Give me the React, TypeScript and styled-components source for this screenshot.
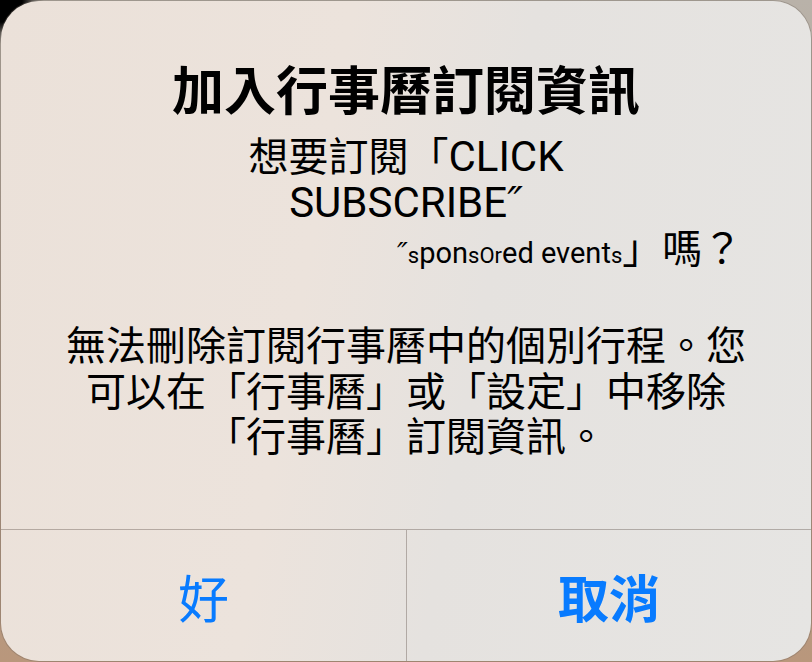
import React from "react";
import styled, { createGlobalStyle, css } from "styled-components";

const GlobalStyle = createGlobalStyle`
  html, body {
    margin: 0;
    padding: 0;
  }
  body {
    width: 812px;
    height: 662px;
    overflow: hidden;
    background:
      radial-gradient(circle at 0 0, #000 0, #000 22px, rgba(0,0,0,0) 44px),
      linear-gradient(to bottom, #b9b2a9 0%, #b49a86 70%, #b9977c 100%);
    font-family: "Liberation Sans", "Noto Sans CJK TC", sans-serif;
  }
`;

const Page = styled.div`
  width: 812px;
  height: 662px;
  padding: 1px;
  box-sizing: border-box;
  display: flex;
`;

const Dialog = styled.div`
  width: 810px;
  height: 660px;
  border-radius: 38px;
  overflow: hidden;
  display: flex;
  flex-direction: column;
  background: linear-gradient(100deg, #ebe1d9 0%, #ece3dc 38%, #e5e2df 58%, #e6e5e3 100%);
  box-shadow: 0 0 0 1px rgba(110, 100, 92, 0.35);
`;

const Content = styled.div`
  flex: 1;
  padding-top: 57px;
  display: flex;
  flex-direction: column;
  align-items: center;
  color: #000;
`;

const Title = styled.div`
  font-family: "Noto Sans CJK TC", sans-serif;
  font-size: 52px;
  font-weight: 700;
  height: 60px;
  line-height: 60px;
  white-space: nowrap;
`;

const Message = styled.div`
  margin-top: 13px;
  width: 100%;
  text-align: center;
`;

const Paragraph = styled.div<{ $gap?: number }>`
  margin-top: ${(p) => p.$gap ?? 0}px;
`;

const Line = styled.div<{ $lh: number; $indent?: number }>`
  font-family: "Noto Sans CJK TC", sans-serif;
  font-size: 40px;
  height: ${(p) => p.$lh}px;
  line-height: ${(p) => p.$lh}px;
  white-space: nowrap;
  ${(p) =>
    p.$indent !== undefined &&
    css`
      text-align: left;
      padding-left: ${p.$indent}px;
    `}
`;

const Latin = styled.span<{ $size: number }>`
  font-family: Roboto, "Liberation Sans", sans-serif;
  font-size: ${(p) => p.$size}px;
  line-height: 1;
`;

const Prime = styled.span`
  font-family: "DejaVu Sans", sans-serif;
  font-style: italic;
`;

const Tiny = styled.span`
  font-size: 22px;
`;

const Buttons = styled.div`
  display: grid;
  grid-template-columns: 405px 1fr;
  height: 131px;
  border-top: 1px solid rgba(70, 55, 45, 0.33);
`;

const Button = styled.div<{ $primary?: boolean; $divider?: boolean }>`
  display: flex;
  align-items: center;
  justify-content: center;
  font-family: "Noto Sans CJK TC", sans-serif;
  font-size: 51px;
  font-weight: ${(p) => (p.$primary ? 600 : 400)};
  color: #087bff;
  ${(p) =>
    p.$divider &&
    css`
      border-left: 1px solid rgba(70, 55, 45, 0.33);
    `}
`;

export default function App() {
  return (
    <>
      <GlobalStyle />
      <Page>
        <Dialog>
          <Content>
            <Title>加入行事曆訂閱資訊</Title>
            <Message>
              <Paragraph>
                <Line $lh={46}>
                  想要訂閱「<Latin $size={42}>CLICK</Latin>
                </Line>
                <Line $lh={46}>
                  <Latin $size={42}>
                    SUBSCRIBE<Prime>″</Prime>
                  </Latin>
                </Line>
                <Line $lh={46} $indent={396}>
                  <Latin $size={29}>
                    <Prime>″</Prime>
                    <Tiny>s</Tiny>pon<Tiny>sOr</Tiny>ed event<Tiny>s</Tiny>
                  </Latin>
                  」嗎？
                </Line>
              </Paragraph>
              <Paragraph $gap={52}>
                <Line $lh={45.5}>無法刪除訂閱行事曆中的個別行程。您</Line>
                <Line $lh={45.5}>可以在「行事曆」或「設定」中移除</Line>
                <Line $lh={45.5}>「行事曆」訂閱資訊。</Line>
              </Paragraph>
            </Message>
          </Content>
          <Buttons>
            <Button>好</Button>
            <Button $primary $divider>
              取消
            </Button>
          </Buttons>
        </Dialog>
      </Page>
    </>
  );
}
